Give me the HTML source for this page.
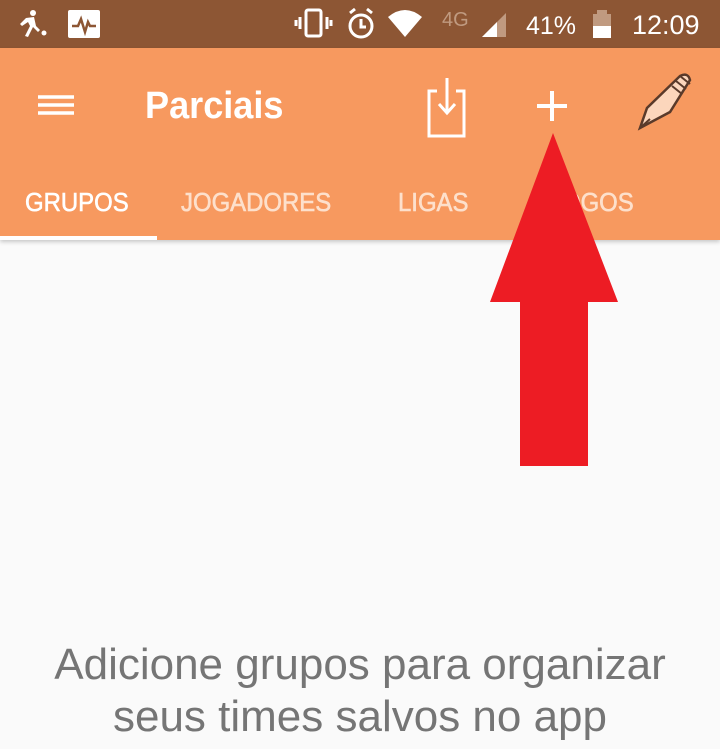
<!DOCTYPE html>
<html><head><meta charset="utf-8"><style>
*{margin:0;padding:0;box-sizing:border-box}
body{width:720px;height:749px;overflow:hidden;background:#fafafa;font-family:"Liberation Sans",Roboto,sans-serif;position:relative}
.sb{position:absolute;left:0;top:0;width:720px;height:48px;background:#8d5634;color:#fff}
.tb{position:absolute;left:0;top:48px;width:720px;height:192px;background:#f7995f;box-shadow:0 2px 4px rgba(0,0,0,.2)}
.t{position:absolute;color:#fff}
.tab{position:absolute;top:187px;font-size:26px;font-weight:normal;color:#fde0cc;transform:scaleX(.92);transform-origin:left;-webkit-text-stroke:0.6px currentColor}
</style></head><body>
<div class="sb">
<svg width="720" height="48" style="position:absolute;left:0;top:0">
<g fill="#fff">
<circle cx="33" cy="13" r="3"/><path d="M26 18 L34 17 L36 26 L40 30 L38 32 L33 27 L28 37 L25 36 L30 26 L28 22 L22 26 L20 24Z"/><circle cx="44" cy="33" r="2.5"/>
<rect x="68" y="10" width="32" height="28" rx="2"/>
</g>
<path d="M72 26 L78 26 L81 19 L85 32 L88 22 L90 26 L96 26" stroke="#8d5634" stroke-width="2.5" fill="none"/>
<g fill="none" stroke="#fff" stroke-width="3">
<rect x="306" y="10" width="15" height="26" rx="2"/>
<path d="M300 17v12M327 17v12M296 20v6M331 20v6"/>
<circle cx="361" cy="26" r="11"/><path d="M361 19v8h5M350 13l5-4M372 13l-5-4"/>
</g>
<path d="M388 17 Q405 3 422 17 L405 37Z" fill="#fff"/>
<text x="442" y="26" font-size="20" fill="#c09a80" font-family="Liberation Sans">4G</text>
<path d="M482 37 L506 13 L506 37Z" fill="#c09a80"/><path d="M482 37 L497 22 L497 37Z" fill="#fff"/>
<text x="526" y="34" font-size="25" fill="#fff" font-family="Liberation Sans">41%</text>
<rect x="593" y="14" width="18" height="24" fill="#c09a80"/><rect x="597" y="10" width="10" height="4" fill="#c09a80"/><rect x="593" y="26" width="18" height="12" fill="#fff"/>
<text x="632" y="34" font-size="27" fill="#fff" font-family="Liberation Sans">12:09</text>
</svg>
</div>
<div class="tb">
<svg width="720" height="192" style="position:absolute;left:0;top:0">
<g stroke="#fff" stroke-width="3.5" fill="none">
<path d="M38 49h36M38 57h36M38 65h36"/>
</g>
<g stroke="#fff" stroke-width="3" fill="none">
<path d="M437 43h-8v45h35v-45h-8"/><path d="M447 30v35M439 56l8 9 8-9"/>
</g>
<path d="M552 43v30M537 58h30" stroke="#fff" stroke-width="4"/>
<path d="M640 80 L647 60 L680 28 Q688 24 690 32 L670 64 Z" fill="#fcd6bc" stroke="#5a3a2a" stroke-width="2.5"/>
<path d="M640 80 L650 71 M680 28l10 8M676 33l10 8M672 38l10 8" stroke="#5a3a2a" stroke-width="2"/>
</svg>
<div class="t" style="left:145px;top:37px;font-size:38px;font-weight:bold;transform:scaleX(.95);transform-origin:left">Parciais</div>
</div>
<div class="tab" style="left:25px;color:#fff">GRUPOS</div>
<div class="tab" style="left:181px">JOGADORES</div>
<div class="tab" style="left:398px">LIGAS</div>
<div class="tab" style="left:550px">JOGOS</div>
<div style="position:absolute;left:0;top:236px;width:157px;height:4px;background:#fff"></div>
<svg width="720" height="749" style="position:absolute;left:0;top:0">
<path d="M553 133 L618 302 L588 302 L588 466 L520 466 L520 302 L490 302 Z" fill="#ed1c24"/>
</svg>
<div style="position:absolute;left:0;top:639px;width:720px;text-align:center;font-size:44px;color:#757575;line-height:52px">Adicione grupos para organizar<br>seus times salvos no app</div>
</body></html>
